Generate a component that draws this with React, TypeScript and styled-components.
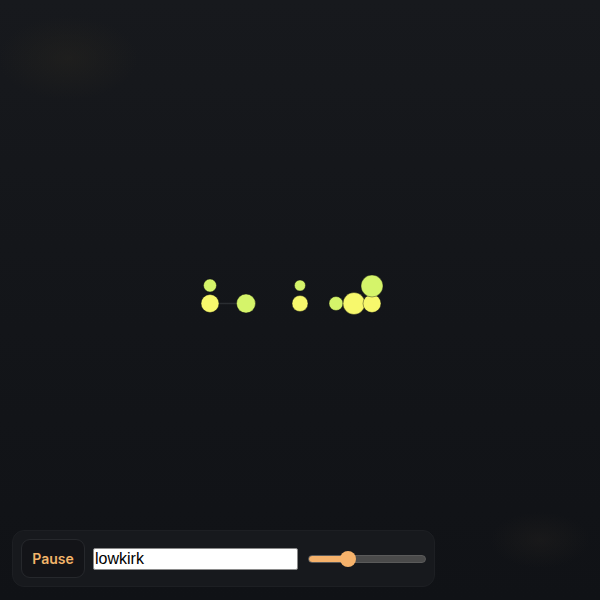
import React, { useState } from "react";
import styled, { createGlobalStyle } from "styled-components";

const Global = createGlobalStyle`
  html, body { margin: 0; padding: 0; height: 100%; }
  body {
    background:
      radial-gradient(ellipse 70px 42px at 68px 58px, rgba(38,36,30,0.5), rgba(38,36,30,0) 100%),
      radial-gradient(ellipse 50px 28px at 540px 540px, rgba(34,32,30,0.45), rgba(34,32,30,0) 100%),
      linear-gradient(180deg, #17191d 0%, #131519 55%, #101216 100%);
    background-attachment: fixed;
    font-family: Inter, "Liberation Sans", sans-serif;
    overflow: hidden;
  }
`;

const Page = styled.div`
  height: 100vh;
  box-sizing: border-box;
  padding: 0 12px 13px;
  display: flex;
  flex-direction: column;
`;

const Stage = styled.div`
  flex: 1;
  display: flex;
  min-height: 0;
`;

const Bar = styled.div`
  align-self: flex-start;
  display: flex;
  align-items: center;
  gap: 8px;
  padding: 8px;
  background: rgba(26, 28, 32, 0.75);
  border: 1px solid #1d1f23;
  border-radius: 12px;
`;

const Button = styled.button`
  width: 64px;
  height: 39px;
  box-sizing: border-box;
  background: #131418;
  border: 1px solid #26282c;
  border-radius: 9px;
  color: #f2b46a;
  font-family: Inter, "Liberation Sans", sans-serif;
  font-weight: 600;
  font-size: 14px;
  cursor: pointer;
`;

const Field = styled.input`
  width: 205px;
  height: 22px;
  box-sizing: border-box;
  border: 1px solid #8a8a8a;
  border-radius: 2px;
  background: #fff;
  color: #000;
  font-family: "Liberation Sans", Arial, sans-serif;
  font-size: 16px;
  padding: 0 1px;
  outline: none;
`;

const Range = styled.input<{ $pct: number }>`
  -webkit-appearance: none;
  appearance: none;
  width: 118px;
  height: 16px;
  margin: 0 0 0 2px;
  background: transparent;
  &::-webkit-slider-runnable-track {
    height: 8px;
    border-radius: 4px;
    border: 1px solid #5a5a5a;
    background: linear-gradient(90deg, #f6b26b 0%, #f6b26b ${(p) => p.$pct}%, #4a4a4a ${(p) => p.$pct}%, #4a4a4a 100%);
  }
  &::-webkit-slider-thumb {
    -webkit-appearance: none;
    width: 16px;
    height: 16px;
    border-radius: 50%;
    background: #f6b26b;
    border: none;
    margin-top: -5px;
  }
`;

const Y = "#f7f86c";
const G = "#d5f46a";

const dots: { x: number; y: number; r: number; c: string }[] = [
  { x: 210, y: 285.5, r: 6.5, c: G },
  { x: 210, y: 303.5, r: 9, c: Y },
  { x: 246, y: 303.5, r: 9.5, c: G },
  { x: 300, y: 285.5, r: 5.5, c: G },
  { x: 300, y: 303.5, r: 8, c: Y },
  { x: 336, y: 303.5, r: 7, c: G },
  { x: 354, y: 303.5, r: 11, c: Y },
  { x: 372, y: 303.5, r: 9, c: Y },
  { x: 372, y: 286, r: 11, c: G },
];

export default function App() {
  const [name, setName] = useState("lowkirk");
  const [val, setVal] = useState(31);
  return (
    <>
      <Global />
      <Page>
        <Stage>
          <svg width="576" height="530" viewBox="12 0 576 530">
            <line x1="210" y1="303.5" x2="246" y2="303.5" stroke="#2a2d31" strokeWidth="1.5" />
            {dots.map((d, i) => (
              <circle key={i} cx={d.x} cy={d.y} r={d.r} fill={d.c} stroke="rgba(10,10,12,0.5)" strokeWidth="0.8" />
            ))}
          </svg>
        </Stage>
        <Bar>
          <Button>Pause</Button>
          <Field value={name} onChange={(e) => setName(e.target.value)} />
          <Range type="range" min={0} max={100} value={val} $pct={val} onChange={(e) => setVal(+e.target.value)} />
        </Bar>
      </Page>
    </>
  );
}
